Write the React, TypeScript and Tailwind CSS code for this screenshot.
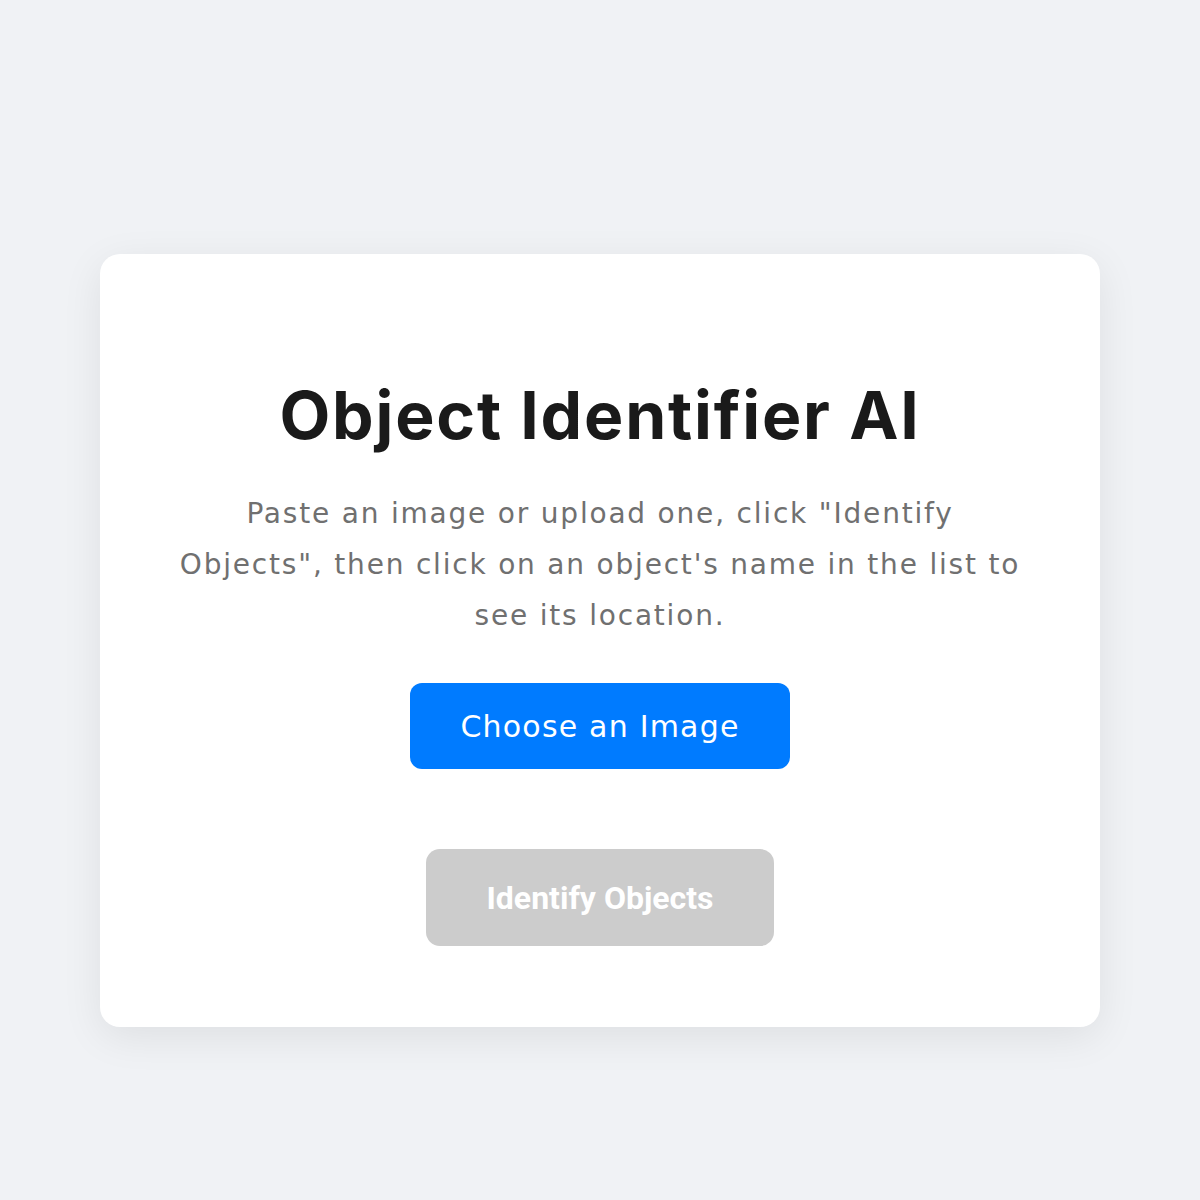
export default function App() {
  return (
    <div className="min-h-screen w-full bg-[#f0f2f5] pt-[254px]">
      <div className="mx-auto flex w-[1000px] flex-col items-center rounded-[20px] bg-white px-[75px] pb-[81px] pt-[128px] shadow-[0_10px_40px_rgba(0,0,0,0.08)]">
        <h1 className="text-center font-['Inter',sans-serif] text-[66px] font-bold leading-[1] tracking-[1.8px] text-[#1a1a1a]">
          Object Identifier AI
        </h1>
        <p className="mt-[40px] text-center font-['DejaVu_Sans',sans-serif] text-[28px] font-normal leading-[51px] tracking-[1.8px] text-[#707070]">
          Paste an image or upload one, click "Identify Objects", then click on an object's name in the list to see its location.
        </p>
        <button className="mt-[42px] flex h-[86px] w-[380px] items-center justify-center rounded-[12px] bg-[#007bff] font-['DejaVu_Sans',sans-serif] text-[30px] font-normal tracking-[1.2px] text-white">
          Choose an Image
        </button>
        <button
          disabled
          className="mt-[80px] flex h-[97px] w-[348px] items-center justify-center rounded-[14px] bg-[#cccccc] font-['Roboto',sans-serif] text-[32px] font-bold text-white"
        >
          Identify Objects
        </button>
      </div>
    </div>
  );
}
